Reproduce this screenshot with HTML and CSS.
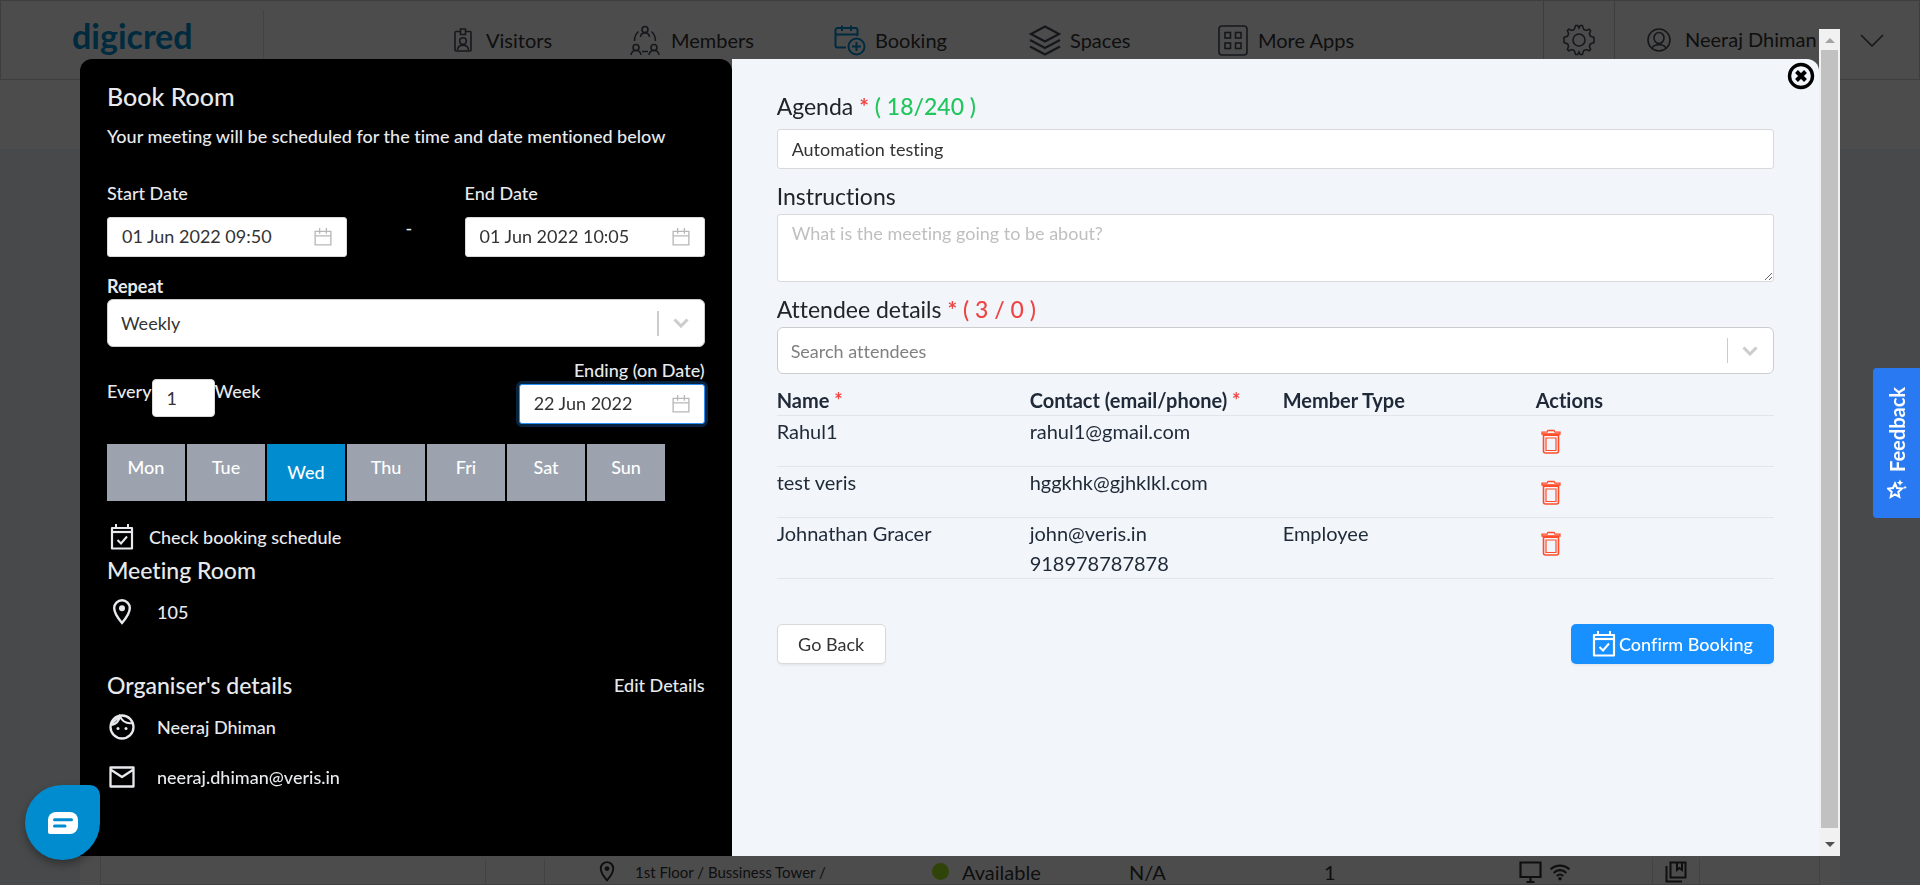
FILE: index.html
```html
<!DOCTYPE html>
<html lang="en">
<head>
<meta charset="utf-8">
<title>digicred - Book Room</title>
<link rel="stylesheet" href="styles.css">
</head>
<body>
<svg class="sprite" aria-hidden="true">
  <symbol id="i-cal" viewBox="0 0 16 16"><path d="M1 3h14v12H1zM1 7h14M5 0v5M11 0v5" fill="none" stroke="currentColor" stroke-width="1.200"/></symbol>
  <symbol id="i-check" viewBox="0 0 24 26"><path d="M6 0v3M18 0v3" stroke="currentColor" stroke-width="2" fill="none"/><path d="M2 4h20v20.500H2z" fill="none" stroke="currentColor" stroke-width="2.200" stroke-linejoin="round"/><path d="M2 8h20" stroke="currentColor" stroke-width="2.200"/><path d="M7.500 16l3.500 3.500 6-7" fill="none" stroke="currentColor" stroke-width="2"/></symbol>
  <symbol id="i-pin" viewBox="0 0 20 26"><path d="M10 1.300c-4.400 0-7.800 3.500-7.800 7.800C2.200 15 10 24 10 24s7.800-9 7.800-14.900c0-4.300-3.400-7.800-7.800-7.800z" fill="none" stroke="currentColor" stroke-width="2.400"/><circle cx="10" cy="9.300" r="3" fill="currentColor"/></symbol>
  <symbol id="i-chev" viewBox="0 0 16 10"><path d="M1.500 1.500L8 8l6.500-6.500" fill="none" stroke="currentColor" stroke-width="3"/></symbol>
  <symbol id="i-trash" viewBox="0 0 20 25"><path d="M1 3.200h5l1-1.700h6l1 1.700h5v1.800H1z" fill="none" stroke="currentColor" stroke-width="1.300"/><path d="M2.500 5.500h15v16.500a2 2 0 0 1-2 2h-11a2 2 0 0 1-2-2z" fill="none" stroke="currentColor" stroke-width="1.600"/><path d="M2.500 6h15" stroke="currentColor" stroke-width="2"/><path d="M5 9h10v12.500H5z" fill="none" stroke="currentColor" stroke-width="1.200"/></symbol>
</svg>

<header class="topbar">
  <div class="brand">digicred</div>
  <nav class="nav">
    <a href="#" class="nav-item n-visitors"><svg width="18" height="24" viewBox="0 0 18 24"><path d="M6.500 3.500H2a1 1 0 0 0-1 1V22a1 1 0 0 0 1 1h14a1 1 0 0 0 1-1V4.500a1 1 0 0 0-1-1h-4.500M6.500 1h5v5.500h-5z"/><circle cx="9" cy="13" r="3.300"/><path d="M3.500 22c.5-6.500 10.500-6.500 11 0"/></svg>Visitors</a>
    <a href="#" class="nav-item n-members"><svg width="30" height="31" viewBox="0 0 30 31"><circle cx="15" cy="4.500" r="3"/><path d="M10.500 12c.5-5.500 8.500-5.500 9 0"/><circle cx="6" cy="22.500" r="3"/><path d="M1 30c.8-6 9.200-6 10 0"/><circle cx="24" cy="22.500" r="3"/><path d="M19 30c.8-6 9.200-6 10 0M12 26.500h6M8.500 6.500C5.500 9 4.500 12 4.500 16M21.500 6.500c3 2.500 4 5.500 4 9.500"/></svg>Members</a>
    <a href="#" class="nav-item n-booking"><svg width="32" height="31" viewBox="0 0 32 31"><path d="M12 22.500H3.500A2 2 0 0 1 1.500 20.500V5a2 2 0 0 1 2-2h18a2 2 0 0 1 2 2v6M1.500 9.500h22M8 .5V6M17 .5V6"/><circle cx="22.500" cy="21.500" r="8"/><path d="M22.500 17v9M18 21.500h9"/></svg>Booking</a>
    <a href="#" class="nav-item n-spaces"><svg width="32" height="31" viewBox="0 0 32 31"><path d="M16 1.500L30 9l-14 7.500L2 9zM1 15l15 8 15-8M1 21.500l15 8 15-8"/></svg>Spaces</a>
    <a href="#" class="nav-item n-more"><svg width="30" height="31" viewBox="0 0 30 31"><rect x="1" y="1" width="28" height="29" rx="3"/><rect x="7" y="7.500" width="5.500" height="5.500"/><rect x="17.500" y="7.500" width="5.500" height="5.500"/><rect x="7" y="18" width="5.500" height="5.500"/><rect x="17.500" y="18" width="5.500" height="5.500"/></svg>More Apps</a>
  </nav>
  <button class="gear" aria-label="Settings"><svg width="32" height="32" viewBox="0 0 32 32"><path d="M12.700 1.500h2l1.300 2.500 1.300-2.500h2l1.500 4 2.400 1 3-1.300 1.400 1.500-1.200 3.100 1 2.300 3.600 1.400v5l-3.600 1.400-1 2.300 1.200 3.100-1.400 1.500-3-1.300-2.400 1-1.500 4h-2L16 28l-1.300 2.500h-2l-1.500-4-2.400-1-3 1.300-1.400-1.500 1.200-3.100-1-2.300L1 18.500v-5l3.600-1.400 1-2.300-1.200-3.100 1.400-1.500 3 1.300 2.400-1z"/><circle cx="16" cy="16" r="6"/></svg></button>
  <div class="user"><svg width="24" height="24" viewBox="0 0 24 24"><circle cx="12" cy="12" r="11"/><ellipse cx="12" cy="10" rx="5" ry="5.500"/><path d="M5 20.500c1.500-5 12.500-5 14 0"/></svg><span>Neeraj Dhiman</span><svg class="user-chev" width="24" height="13" viewBox="0 0 24 13"><path d="M1 1l11 11L23 1"/></svg></div>
</header>
<main class="page">
  <div class="strip"></div>
  <div class="listing">
    <div class="room-row">
      <div></div><div></div>
      <div class="room-info">
        <span class="room-place"><svg width="16" height="21"><use href="#i-pin"/></svg>1st Floor / Bussiness Tower /</span>
        <span class="room-state"><i class="dot"></i>Available</span>
        <span>N/A</span>
        <span>1</span>
        <span class="room-kit"><svg width="23" height="24" viewBox="0 0 23 24"><path d="M1.500 2.500h20v14.500h-20zM11.500 17v4M7.500 22h8" fill="none" stroke="currentColor" stroke-width="2.200"/></svg><svg width="22" height="18" viewBox="0 0 24 20"><path d="M1.500 7c6-5.500 15-5.500 21 0M5 11c4-4 10-4 14 0M8.500 14.500c2-2 5-2 7 0" fill="none" stroke="currentColor" stroke-width="2.400"/><circle cx="12" cy="17.500" r="2" fill="currentColor"/></svg></span>
      </div>
      <div class="room-mark"><svg width="22" height="22" viewBox="0 0 22 22"><path d="M5.500 1.500h15v15h-15zM1.500 5v15.500H17M12 2v7l2.500-2 2.500 2V2" fill="none" stroke="currentColor" stroke-width="2"/></svg></div>
      <div></div>
    </div>
  </div>
</main>

<div class="overlay"></div>
<div class="modal" role="dialog" aria-label="Book Room">
  <section class="side">
    <h1>Book Room</h1>
    <p class="lead">Your meeting will be scheduled for the time and date mentioned below</p>
    <div class="dates">
      <div class="date-col">
        <label for="start">Start Date</label>
        <div class="field"><input id="start" type="text" value="01 Jun 2022 09:50"><svg width="18" height="18"><use href="#i-cal"/></svg></div>
      </div>
      <span class="dash">-</span>
      <div class="date-col">
        <label for="end">End Date</label>
        <div class="field"><input id="end" type="text" value="01 Jun 2022 10:05"><svg width="18" height="18"><use href="#i-cal"/></svg></div>
      </div>
    </div>
    <label class="repeat-label" for="repeat">Repeat</label>
    <div class="select"><select id="repeat"><option>Weekly</option></select><i class="sep"></i><svg width="16" height="10"><use href="#i-chev"/></svg></div>
    <div class="recur">
      <div class="every"><label for="every">Every</label><input id="every" type="text" value="1"><span>Week</span></div>
      <div class="ending"><label for="until">Ending (on Date)</label>
        <div class="field focus"><input id="until" type="text" value="22 Jun 2022"><svg width="18" height="18"><use href="#i-cal"/></svg></div></div>
    </div>
    <div class="days">
      <button>Mon</button><button>Tue</button><button class="on" aria-pressed="true">Wed</button><button>Thu</button><button>Fri</button><button>Sat</button><button>Sun</button>
    </div>
    <div class="line check"><svg width="24" height="26"><use href="#i-check"/></svg><span>Check booking schedule</span></div>
    <h2 class="room-title">Meeting Room</h2>
    <div class="line place"><svg width="20" height="26"><use href="#i-pin"/></svg><span>105</span></div>
    <div class="org-head"><h2>Organiser's details</h2><a href="#">Edit Details</a></div>
    <div class="line person"><svg width="26" height="26" viewBox="0 0 26 26"><circle cx="13" cy="13" r="11.500" fill="none" stroke="currentColor" stroke-width="2.300"/><circle cx="9" cy="14.500" r="1.500" fill="currentColor"/><circle cx="17" cy="14.500" r="1.500" fill="currentColor"/><path d="M3 11c4-1 7-4 8-8.500 2.500 5 7 7.500 12.500 6.500M3 9.500L10 3" fill="none" stroke="currentColor" stroke-width="2"/></svg><span>Neeraj Dhiman</span></div>
    <div class="line mail"><svg width="26" height="22" viewBox="0 0 26 22"><path d="M1.500 1.500h23v19h-23zM1.500 3.500L13 11l11.500-7.500" fill="none" stroke="currentColor" stroke-width="2.300" stroke-linejoin="round"/></svg><span>neeraj.dhiman@veris.in</span></div>
  </section>
  <section class="main">
    <button class="close" aria-label="Close"><svg width="28" height="28" viewBox="0 0 28 28"><circle cx="14" cy="14" r="11.500" fill="none" stroke="#000" stroke-width="3.400"/><path d="M9.500 9.500l9 9M18.500 9.500l-9 9" stroke="#000" stroke-width="4"/></svg></button>
    <label class="big" for="agenda">Agenda <b class="req">*</b> <span class="ok">( 18/240 )</span></label>
    <input class="box" id="agenda" type="text" value="Automation testing">
    <label class="big instr" for="instr">Instructions</label>
    <textarea class="box" id="instr" placeholder="What is the meeting going to be about?"></textarea>
    <label class="big att" for="search">Attendee details <b class="req">*</b> <span class="bad">( 3 / 0 )</span></label>
    <div class="select"><input id="search" type="text" placeholder="Search attendees"><i class="sep"></i><svg width="16" height="10"><use href="#i-chev"/></svg></div>
    <table>
      <thead><tr><th>Name <b class="req">*</b></th><th>Contact (email/phone) <b class="req">*</b></th><th>Member Type</th><th>Actions</th></tr></thead>
      <tbody>
        <tr><td>Rahul1</td><td>rahul1@gmail.com</td><td></td><td><button class="del" aria-label="Delete"><svg width="20" height="25"><use href="#i-trash"/></svg></button></td></tr>
        <tr><td>test veris</td><td>hggkhk@gjhklkl.com</td><td></td><td><button class="del" aria-label="Delete"><svg width="20" height="25"><use href="#i-trash"/></svg></button></td></tr>
        <tr><td>Johnathan Gracer</td><td>john@veris.in<br>918978787878</td><td>Employee</td><td><button class="del" aria-label="Delete"><svg width="20" height="25"><use href="#i-trash"/></svg></button></td></tr>
      </tbody>
    </table>
    <div class="actions"><button class="back">Go Back</button><button class="confirm"><svg width="24" height="26"><use href="#i-check"/></svg>Confirm Booking</button></div>
  </section>
  <div class="scroll" aria-hidden="true"><svg width="10" height="5"><path d="M0 5l5-5 5 5z" fill="#a3a3a3"/></svg><i class="thumb"></i><svg class="down" width="10" height="5"><path d="M0 0l5 5 5-5z" fill="#505050"/></svg></div>
</div>

<button class="chat" aria-label="Chat"><svg width="30" height="22" viewBox="0 0 30 22"><path d="M8 0h14a8 8 0 0 1 8 8v6a8 8 0 0 1-8 8H2a2 2 0 0 1-2-2V8a8 8 0 0 1 8-8z" fill="#fff"/><path d="M6.500 7.800h17M6.500 14h10.500" stroke="#008ccf" stroke-width="3" stroke-linecap="round"/></svg></button>
<button class="feedback"><svg width="20" height="22" viewBox="0 0 20 22"><path d="M8 6.500l2 4.500 5 .6-3.700 3.300 1 5L8 17.500 3.700 20l1-5.100L1 11.600l5-.6z" fill="none" stroke="#fff" stroke-width="2"/><path d="M13 2.500l1 2.300 2.300 1-2.300 1-1 2.300-1-2.300-2.300-1 2.300-1zM18 8.500l.6 1.400 1.400.6-1.400.6-.6 1.400-.6-1.400-1.400-.6 1.400-.6z" fill="#fff"/></svg><span>Feedback</span></button>
</body>
</html>
```
FILE: styles.css
```css
* { box-sizing: border-box; }
body { margin: 0; font-family: Lato, "Liberation Sans", sans-serif; font-size: 18px; line-height: 24px; font-variant-ligatures: none; color: #212529; background: #f1f4f9; min-height: 100vh; display: flex; flex-direction: column; overflow: hidden; }
h1, h2, p { margin: 0; font-weight: 500; }
button, input, select, textarea { font: inherit; font-variant-ligatures: none; color: inherit; }
button { cursor: pointer; border: 0; padding: 0; background: none; }
a { color: inherit; text-decoration: none; }
svg { flex: none; display: block; }
.sprite { position: absolute; width: 0; height: 0; }

.topbar { height: 80px; background: #fff; border: 1px solid #d0d0d0; display: flex; font-size: 20px; }
.topbar svg { fill: none; stroke: #4a4f5c; stroke-width: 1.6; }
.brand { width: 263px; margin-top: 9px; padding-left: 71px; border-right: 1px solid #dcdcdc; color: #008ccf; font-size: 34px; line-height: 52px; font-weight: 700; }
.nav { flex: 1; display: flex; align-items: center; padding-left: 190px; }
.nav-item { display: flex; align-items: center; color: #333; }
.n-visitors { gap: 14px; width: 176px; }
.n-members { gap: 11px; width: 204px; }
.n-booking { gap: 9px; width: 195px; }
.nav .n-booking svg { stroke: #008ccf; stroke-width: 2; }
.n-spaces { gap: 9px; width: 189px; }
.n-spaces svg { stroke-width: 2.4; }
.n-more { gap: 10px; }
.gear { width: 72px; border-left: 1px solid #ccc; border-right: 1px solid #ccc; display: grid; place-items: center; }
.user { width: 304px; display: flex; align-items: center; padding: 0 35px 0 32px; color: #333; }
.user span { margin-left: 14px; padding-bottom: 2px; }
.user-chev { margin-left: auto; }

.page { flex: 1; display: flex; flex-direction: column; }
.strip { height: 69px; background: #fff; }
.listing { flex: 1; margin: 0 80px; background: #fff; display: flex; flex-direction: column; justify-content: flex-end; }
.room-row { height: 50px; padding-top: 23px; margin: 0 20px; border: 1px solid #ddd; display: grid; grid-template-columns: 384px 59px 1fr 47px 120px; color: #333; font-size: 20px; }
.room-row > div + div { border-left: 1px solid #ddd; }
.room-info { padding-left: 54px; display: grid; grid-template-columns: 333px 197px 195px 195px 1fr; align-items: center; }
.room-info span { display: flex; align-items: center; }
.room-place { gap: 20px; font-size: 15px; }
.room-state { gap: 13px; }
.room-kit { gap: 7px; }
.room-mark { display: grid; place-items: center; }
.dot { width: 17px; height: 17px; border-radius: 50%; background: #a0e21f; }

.overlay { position: fixed; inset: 0; background: rgba(0, 0, 0, .7); }
.modal { position: fixed; inset: 29px 80px; display: grid; grid-template-columns: 652fr 1088fr 21px; }
.side { margin-top: 30px; padding: 21px 27px; background: #000; color: #e8eaee; font-weight: 500; border-radius: 12px 12px 0 0; }
.side h1 { font-size: 25px; line-height: 32px; }
.side h2 { font-size: 23px; line-height: 28px; }
.lead { margin-top: 12px; }
.dates { margin-top: 33px; display: flex; justify-content: space-between; align-items: flex-end; }
.date-col { width: 240px; }
.date-col label { display: block; margin-bottom: 12px; }
.dash { line-height: 58px; padding-left: 6px; }
.field { position: relative; height: 40px; color: #333; font-weight: 400; }
.field input { width: 100%; height: 40px; padding: 0 40px 2px 14px; border: 1px solid #d9d9d9; border-radius: 3px; background: #fff; outline: 0; }
.field svg { position: absolute; right: 15px; top: 11px; color: #b8b8b8; }
.field.focus input { border-color: #2a90f5; box-shadow: 0 0 0 3px rgba(24, 144, 255, .25); }
.repeat-label { display: block; margin-top: 17px; margin-bottom: 1px; font-weight: 700; }
.select { position: relative; display: flex; align-items: center; height: 48px; padding-right: 15px; border: 1px solid #ccc; border-radius: 6px; background: #fff; color: #333; font-weight: 400; }
.select select, .select input { appearance: none; flex: 1; min-width: 0; height: 44px; padding: 0 13px; border: 0; background: none; outline: 0; }
.select input::placeholder { color: #808080; }
.select .sep { width: 2px; height: 25px; margin-right: 14px; background: #ccc; }
.select svg { color: #ccc; }
.recur { margin-top: 11px; display: flex; justify-content: space-between; }
.every { display: flex; padding-top: 21px; line-height: 24px; }
.every input { width: 63px; height: 38px; padding: 0 14px; border: 1px solid #d9d9d9; border-radius: 4px; background: #fff; color: #333; font-weight: 400; }
.ending { width: 186px; text-align: right; }
.ending .field { margin-top: 2px; }
.days { margin-top: 20px; display: flex; gap: 2px; }
.days button { width: 78px; height: 57px; padding-bottom: 12px; background: #9ca3af; color: #fff; }
.days .on { background: #008ccf; padding-bottom: 2px; }
.line { display: flex; align-items: center; height: 26px; }
.check { margin-top: 23px; gap: 15px; padding-left: 3px; }
.room-title { margin-top: 6px; }
.place { margin-top: 15px; padding-left: 5px; gap: 25px; }
.org-head { margin-top: 46px; display: flex; justify-content: space-between; align-items: center; }
.person { margin-top: 15px; gap: 22px; padding-left: 2px; }
.mail { margin-top: 24px; gap: 22px; padding-left: 2px; }

.main { position: relative; margin-top: 30px; padding: 31px 45px 31px 45px; background: #f2f5fa; border-radius: 0 12px 0 0; }
.close { position: absolute; right: 4px; top: 3px; }
.big { display: block; font-size: 23px; line-height: 32px; }
.req { color: #ef4444; font-weight: 700; }
.ok { color: #22c55e; font-weight: 500; }
.bad { color: #ef4444; font-weight: 500; }
.box { display: block; width: 100%; padding: 6px 14px; border: 1px solid #d9d9d9; border-radius: 3px; background: #fff; color: #333; }
input.box { height: 40px; margin-top: 7px; }
textarea.box { height: 68px; margin-top: 2px; resize: vertical; }
textarea::placeholder { color: #bfbfbf; }
.instr, .att { margin-top: 11px; }
.main .select { height: 47px; margin-top: 2px; }
.main .sep { width: 1px; }
table { width: 100%; margin-top: 11px; border-collapse: collapse; table-layout: fixed; font-size: 20px; line-height: 30px; color: #1f2937; }
th { padding: 0; text-align: left; font-weight: 700; width: 253px; }
th:last-child { width: auto; }
tr { border-bottom: 1px solid #e2e5ea; }
td { padding: 0; height: 51px; vertical-align: top; }
.del { display: block; margin: 13px 0 0 5px; color: #ff4d2b; }
.actions { margin-top: 45px; display: flex; justify-content: space-between; }
.actions button { height: 40px; border-radius: 5px; box-shadow: 0 2px 2px rgba(0, 0, 0, .05); }
.actions .back { width: 109px; background: #fff; border: 1px solid #d9d9d9; color: #333; }
.actions .confirm { width: 203px; display: flex; align-items: center; justify-content: center; gap: 3px; background: #1890ff; color: #fff; font-weight: 500; }

.scroll { background: #f1f1f1; display: flex; flex-direction: column; align-items: center; padding: 9px 0; }
.thumb { flex: 1; width: 17px; margin: 7px 0 14px; background: #c1c1c1; }

.chat { position: fixed; left: 25px; bottom: 25px; width: 75px; height: 75px; display: grid; place-items: center; background: #008ccf; border-radius: 50% 10px 50% 50%; box-shadow: 0 4px 8px rgba(0, 0, 0, .35); }
.feedback { position: fixed; right: 0; top: 368px; width: 47px; height: 150px; background: #2979f2; border-radius: 4px 0 0 4px; color: #fff; font-size: 20px; font-weight: 700; display: flex; flex-direction: column-reverse; align-items: center; justify-content: center; gap: 5px; }
.feedback span { writing-mode: vertical-rl; transform: rotate(180deg); }
```
